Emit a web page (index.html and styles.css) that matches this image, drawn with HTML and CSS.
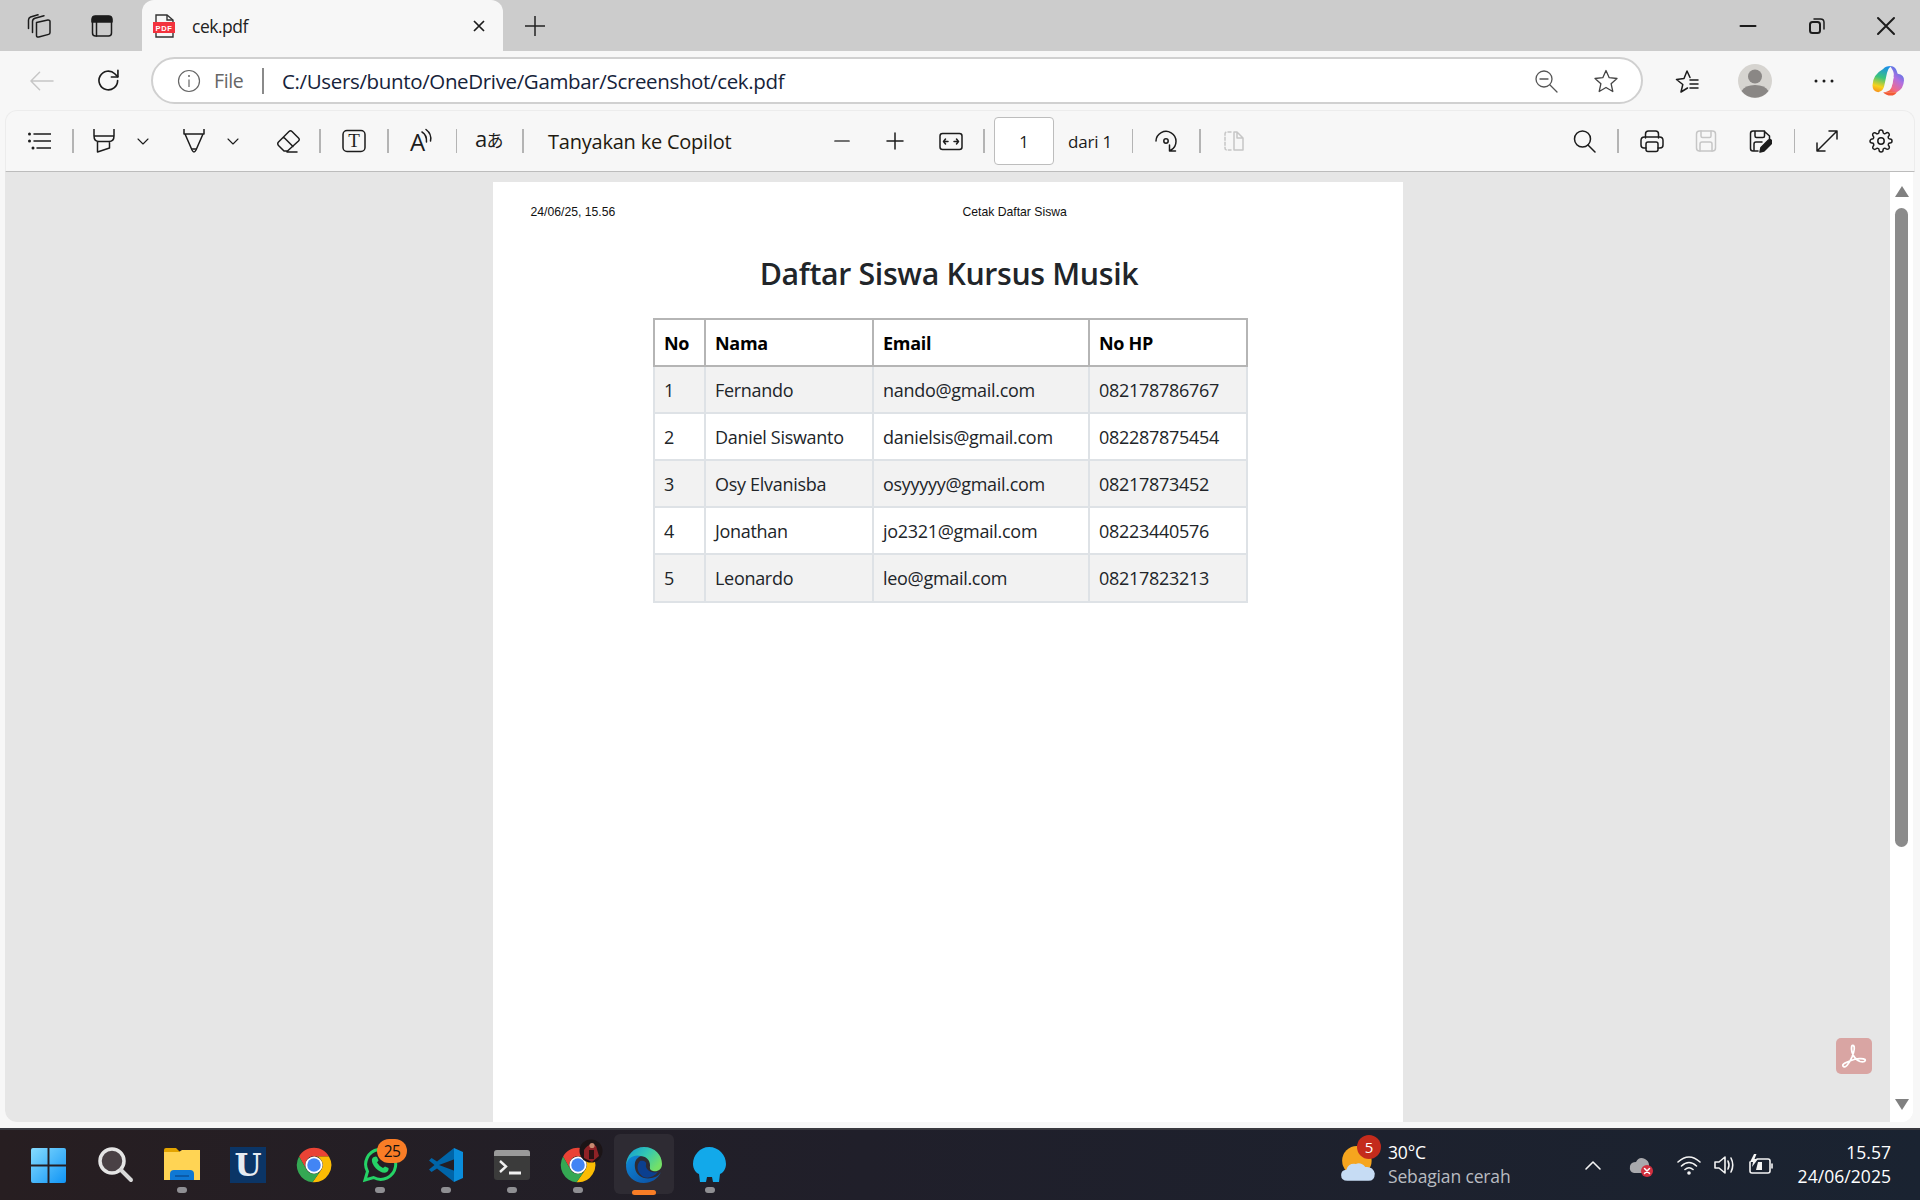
FILE: index.html
```html
<!DOCTYPE html>
<html lang="id">
<head>
<meta charset="utf-8">
<title>cek.pdf</title>
<link rel="stylesheet" href="styles.css">
</head>
<body>
<div class="app">
  <header class="tabbar">
    <div class="tabbar-left">
      <svg class="ic" viewBox="0 0 24 24"><path d="M9.500 8.500 20.800 6Q23 5.800 23 7.600V18.500Q23 20 21.600 20.400L11.800 23Q9.500 23.500 9.500 21.400Z"/><path d="M5.500 18.500V7.500Q5.500 5 8 4.300L17 1.800"/><path d="M1.500 14.500V6Q1.500 3.800 3.500 3L11 .8"/></svg>
      <svg class="ic" viewBox="0 0 24 24"><rect x="2.500" y="2.500" width="19" height="19.500" rx="3"/><path class="solid" d="M2 5.500Q2 2 5.500 2H18.500Q22 2 22 5.500V8H2Z"/><path d="M6.500 8V22"/></svg>
    </div>
    <div class="tab">
      <svg class="tab-pdf" viewBox="0 0 24 24"><path class="thin" d="M4 9V1H15L21 6V9M4 18V23H21V18"/><path class="thin" d="M15 1V6H21"/><rect class="red" x="1" y="8" width="22" height="11"/><text class="pdf-txt" x="12" y="16.500" text-anchor="middle">PDF</text></svg>
      <span class="tab-title">cek.pdf</span>
      <svg class="tab-x" viewBox="0 0 12 12"><path d="M1 1 11 11M11 1 1 11"/></svg>
    </div>
    <svg class="new-tab" viewBox="0 0 22 22"><path d="M11 1V21M1 11H21"/></svg>
    <div class="win-ctrl">
      <svg class="ic" viewBox="0 0 24 24"><path class="w2" d="M4.500 12H19.500"/></svg>
      <svg class="ic" viewBox="0 0 24 24"><rect class="w2" x="5" y="8" width="10" height="11" rx="2.500"/><path d="M9 5H15.500Q19 5 19 8.500V15"/></svg>
      <svg class="ic" viewBox="0 0 24 24"><path class="w2" d="M4 4 20 20M20 4 4 20"/></svg>
    </div>
  </header>

  <nav class="navbar">
    <svg class="ic-l muted" viewBox="0 0 26 22"><path d="M25 11H2M11 2 2 11 11 20"/></svg>
    <svg class="ic-l refresh" viewBox="0 0 26 26"><path d="M22.500 13A9.700 9.700 0 1 1 19.500 6L22.500 9"/><path d="M22.800 2.500V9.300H16"/></svg>
    <div class="address">
      <svg class="info" viewBox="0 0 24 24"><circle cx="12" cy="12" r="10.500"/><path d="M12 10.500V18"/><circle class="dot" cx="12" cy="7" r="1"/></svg>
      <span class="file-label">File</span>
      <span class="addr-sep"></span>
      <span class="url">C:/Users/bunto/OneDrive/Gambar/Screenshot/cek.pdf</span>
      <svg class="ic zoom-out" viewBox="0 0 24 24"><circle cx="10" cy="10" r="8"/><path d="M16 16 23 23M6 10H14"/></svg>
      <svg class="ic star" viewBox="0 0 24 24"><path d="M12 1.500 15.200 8.700 23 9.500 17.100 14.700 18.800 22.500 12 18.500 5.200 22.500 6.900 14.700 1 9.500 8.800 8.700Z"/></svg>
    </div>
    <svg class="ic fav" viewBox="0 0 24 24"><path d="M12.500 19 6 23 7.800 15.500 1.500 10.500 9 9.500 12 2 15 8.500M15 11H23M15 15H23M15 19H23"/></svg>
    <svg class="profile" viewBox="0 0 34 34"><circle class="p-bg" cx="17" cy="17" r="17"/><circle class="p-fg" cx="17" cy="12.500" r="7"/><path class="p-fg" d="M3.500 27Q7 21 17 21T30.500 27A17 17 0 0 1 3.500 27Z"/></svg>
    <svg class="dots" viewBox="0 0 24 6"><circle cx="4" cy="3" r="1.500"/><circle cx="12" cy="3" r="1.500"/><circle cx="20" cy="3" r="1.500"/></svg>
    <svg class="copilot" viewBox="0 0 34 32">
      <defs>
        <linearGradient id="cpA" x1="0.600" y1="0" x2="0.400" y2="1"><stop offset="0" stop-color="#1b8fe8"/><stop offset="0.450" stop-color="#3cc47c"/><stop offset="0.800" stop-color="#f8d21c"/><stop offset="1" stop-color="#f79a1e"/></linearGradient>
        <linearGradient id="cpB" x1="0.800" y1="0" x2="0.200" y2="1"><stop offset="0" stop-color="#2b7bea"/><stop offset="0.450" stop-color="#b26fe0"/><stop offset="0.800" stop-color="#f06a8c"/><stop offset="1" stop-color="#f4633a"/></linearGradient>
      </defs>
      <path fill="url(#cpB)" d="M19 1Q24 1 25.500 5L27 9Q34 10 33.500 16 33 25 26 28H14Q20 27 21 22L23 10Q23 6 19 1Z"/>
      <path fill="url(#cpA)" d="M12 4Q14 1 20 1 17.500 3 16 8L13 22Q12 27 7 28 1 28 1 21 1 10 12 4Z"/>
      <path fill="#f35a35" d="M12 28H26Q24 31.500 20 31.500 15 31.500 12 28Z"/>
      <path fill="#f7f7f7" d="M19.500 12 23 12 21.500 20 17.500 20Z"/>
    </svg>
  </nav>

  <div class="pdfbar">
    <svg class="ic" viewBox="0 0 24 24"><path d="M7 5H24M7 12H24M10 19H24"/><circle class="dot" cx="2.500" cy="5" r="1.500"/><circle class="dot" cx="2.500" cy="12" r="1.500"/><circle class="dot" cx="6" cy="19" r="1.500"/></svg>
    <span class="sep"></span>
    <svg class="ic" viewBox="0 0 24 24"><path d="M2 0V7Q2 12.500 7 12.500H17Q22 12.500 22 7V0M2 7H22M5.500 12.500V23L17.500 19V12.500"/></svg>
    <svg class="chev" viewBox="0 0 24 24"><path d="M7 10 12 15 17 10"/></svg>
    <svg class="ic" viewBox="0 0 24 24"><path d="M2 0V5H22V0M3 5 10 21Q12 25 14 21L21 5M10 20H14"/></svg>
    <svg class="chev" viewBox="0 0 24 24"><path d="M7 10 12 15 17 10"/></svg>
    <svg class="ic" viewBox="0 0 24 24"><path d="M2.500 13 13 2.500Q14.500 1 16 2.500L22.500 9Q24 10.500 22.500 12L11.500 22H8L2.500 16.500Q1 14.500 2.500 13ZM7.500 8 17 17.500M11 23H21"/></svg>
    <span class="sep"></span>
    <svg class="ic" viewBox="0 0 24 24"><rect x="1" y="1.500" width="22" height="21" rx="4"/><text class="ic-serif" x="12" y="18" text-anchor="middle">T</text></svg>
    <span class="sep"></span>
    <svg class="ic open" viewBox="0 0 24 24"><text class="ic-a" x="7.500" y="22" text-anchor="middle">A</text><path d="M12 3Q17 6 16.500 13M16 .5Q22 5 20.500 12"/></svg>
    <span class="sep sep-thin"></span>
    <svg class="ic open" viewBox="0 0 24 24"><text class="ic-tr" x="-2" y="18">a</text><text class="ic-tr-j" x="9.500" y="18">あ</text></svg>
    <span class="sep"></span>
    <span class="ask">Tanyakan ke Copilot</span>
    <svg class="ic" viewBox="0 0 24 24"><path class="grey-w" d="M5 12H19"/></svg>
    <svg class="ic" viewBox="0 0 24 24"><path d="M12 4V20M4 12H20"/></svg>
    <svg class="ic" viewBox="0 0 24 24"><rect x="1" y="4.500" width="22" height="16" rx="2.500"/><path d="M4.500 12.500H9M6.500 10 4.500 12.500 6.500 15M15 12.500H19.500M17.500 10 19.500 12.500 17.500 15"/></svg>
    <span class="sep"></span>
    <span class="page-input">1</span>
    <span class="page-total">dari 1</span>
    <span class="sep sep-thin"></span>
    <svg class="ic" viewBox="0 0 24 24"><path d="M2 12A10 10 0 1 1 17 21M15.500 16V22H21.500"/><circle cx="12" cy="12" r="2.200"/></svg>
    <span class="sep"></span>
    <svg class="ic pale" viewBox="0 0 24 24"><path d="M12 3H15L21 9V21H12ZM15 3V9H21"/><path class="dash" d="M9 3H5Q3 3 3 5V19Q3 21 5 21H9"/></svg>
    <svg class="ic" viewBox="0 0 24 24"><circle cx="10.500" cy="10" r="8"/><path d="M16 16 23 23"/></svg>
    <span class="sep"></span>
    <svg class="ic" viewBox="0 0 24 24"><path d="M5.500 9V5Q5.500 2 8.500 2H15.500Q18.500 2 18.500 5V9M6 19H4Q1 19 1 16V11.500Q1 8 4.500 8H19.500Q23 8 23 11.500V16Q23 19 20 19H18"/><rect x="6" y="13" width="12" height="9.500" rx="2"/></svg>
    <svg class="ic pale" viewBox="0 0 24 24"><rect x="2.500" y="2" width="19" height="20" rx="3"/><path d="M7 2V7Q7 8.500 8.500 8.500H15.500Q17 8.500 17 7V2M6 22V15Q6 13 8 13H16Q18 13 18 15V22"/></svg>
    <svg class="ic" viewBox="0 0 24 24"><path d="M10 22H5Q2.500 22 2.500 19.500V4.500Q2.500 2 5 2H16L21.500 7V10M7 2V7Q7 8.500 8.500 8.500H15Q16.500 8.500 16.500 7V2M6 21V15Q6 13 8 13H14"/><path class="solid" d="M12 23 13 18.500 20.500 11Q22 10 23.500 11.500 24.500 13 23.500 14.500L16 22Z"/></svg>
    <span class="sep sep-thin"></span>
    <svg class="ic" viewBox="0 0 24 24"><path d="M2 22 22 2M14 2H22V10M2 14V22H10"/></svg>
    <svg class="ic" viewBox="0 0 24 24"><path d="M19.400 15a1.650 1.650 0 0 0 .33 1.820l.06.06a2 2 0 0 1 0 2.830 2 2 0 0 1-2.830 0l-.06-.06a1.650 1.650 0 0 0-1.820-.33 1.650 1.650 0 0 0-1 1.510V21a2 2 0 0 1-2 2 2 2 0 0 1-2-2v-.09A1.650 1.650 0 0 0 9 19.400a1.650 1.650 0 0 0-1.820.33l-.06.06a2 2 0 0 1-2.830 0 2 2 0 0 1 0-2.830l.06-.06a1.650 1.650 0 0 0 .33-1.820 1.650 1.650 0 0 0-1.510-1H3a2 2 0 0 1-2-2 2 2 0 0 1 2-2h.09A1.650 1.650 0 0 0 4.600 9a1.650 1.650 0 0 0-.33-1.820l-.06-.06a2 2 0 0 1 0-2.830 2 2 0 0 1 2.830 0l.06.06a1.650 1.650 0 0 0 1.820.33H9a1.650 1.650 0 0 0 1-1.510V3a2 2 0 0 1 2-2 2 2 0 0 1 2 2v.09a1.650 1.650 0 0 0 1 1.510 1.650 1.650 0 0 0 1.820-.33l.06-.06a2 2 0 0 1 2.830 0 2 2 0 0 1 0 2.830l-.06.06a1.650 1.650 0 0 0-.33 1.820V9a1.650 1.650 0 0 0 1.510 1H21a2 2 0 0 1 2 2 2 2 0 0 1-2 2h-.09a1.650 1.650 0 0 0-1.510 1z"/><circle cx="12" cy="12" r="3.200"/></svg>
  </div>

  <main class="viewer">
    <div class="canvas">
      <article class="page">
        <div class="print-head">
          <span class="print-date">24/06/25, 15.56</span>
          <span class="print-title">Cetak Daftar Siswa</span>
        </div>
        <div class="doc">
          <h1 class="doc-title">Daftar Siswa Kursus Musik</h1>
          <table class="students">
            <colgroup><col class="c1"><col class="c2"><col class="c3"><col class="c4"></colgroup>
            <thead><tr><th>No</th><th>Nama</th><th>Email</th><th>No HP</th></tr></thead>
            <tbody>
              <tr><td>1</td><td>Fernando</td><td>nando@gmail.com</td><td>082178786767</td></tr>
              <tr><td>2</td><td>Daniel Siswanto</td><td>danielsis@gmail.com</td><td>082287875454</td></tr>
              <tr><td>3</td><td>Osy Elvanisba</td><td>osyyyyy@gmail.com</td><td>08217873452</td></tr>
              <tr><td>4</td><td>Jonathan</td><td>jo2321@gmail.com</td><td>08223440576</td></tr>
              <tr><td>5</td><td>Leonardo</td><td>leo@gmail.com</td><td>08217823213</td></tr>
            </tbody>
          </table>
        </div>
      </article>
      <div class="acrobat">
        <svg viewBox="0 0 36 36"><path d="M7 28C9 31 13 26 16 19 18 14 19 9 17.500 7.500 15.500 6.500 15 10 16 14 17.500 19 20 22 24 23.500 28 24.500 30 23 29 21.500 27 20 20 20.500 15 22.500 10 24.500 6 26 7 28Z"/></svg>
      </div>
    </div>
    <div class="scrollbar">
      <span class="arrow-up"></span>
      <span class="thumb"></span>
      <span class="arrow-down"></span>
    </div>
  </main>

  <footer class="taskbar">
    <div class="tb-apps">
      <div class="app-slot">
        <svg class="app-ic win-ic" viewBox="0 0 36 36">
          <defs><linearGradient id="winG" x1="0" y1="0" x2="1" y2="1"><stop offset="0" stop-color="#86dcff"/><stop offset="1" stop-color="#0f94f5"/></linearGradient></defs>
          <path fill="url(#winG)" d="M0 2Q0 0 2 0H17V17H0ZM19 0H34Q36 0 36 2V17H19ZM0 19H17V36H2Q0 36 0 34ZM19 19H36V34Q36 36 34 36H19Z"/>
        </svg>
      </div>
      <div class="app-slot">
        <svg class="app-ic" viewBox="0 0 36 36"><circle cx="14" cy="14" r="12" fill="#4a4145" stroke="#e5e5e5" stroke-width="3.500"/><path d="M23 23 33 33" stroke="#d9d9d9" stroke-width="4" stroke-linecap="round"/></svg>
      </div>
      <div class="app-slot has-dot">
        <svg class="app-ic" viewBox="0 0 36 36"><path fill="#e3a400" d="M0 3Q0 1 2 1H12L16 5H0Z"/><path fill="#ffd454" d="M0 5H15L18 3H36V33H0Z"/><path fill="#0f78d4" d="M6 33V27Q6 23 10 23H26Q30 23 30 27V33Z"/><path fill="#0a5aa8" d="M11 28H25V30H11Z"/></svg>
      </div>
      <div class="app-slot">
        <span class="u-logo">U</span>
      </div>
      <div class="app-slot">
        <svg class="app-ic" viewBox="0 0 48 48"><use href="#chrome-mark"/></svg>
      </div>
      <div class="app-slot has-dot">
        <svg class="app-ic" viewBox="0 0 36 36"><path d="M3 33 5.500 24.500A15 15 0 1 1 11.500 30.500Z" fill="none" stroke="#25d366" stroke-width="3"/><path fill="#25d366" d="M12 10Q14 9 15 10L16.500 13.500 15 15.500Q17 19 21 21L23 19.500 26.500 21Q27 24 24 25.500 19 26.500 14 21.500 9 16 10 12Q11 10 12 10Z"/></svg>
        <span class="wa-badge">25</span>
      </div>
      <div class="app-slot has-dot">
        <svg class="app-ic" viewBox="0 0 36 36"><path fill="#0065a9" d="M1 13.500 3.500 11 9 14.500 26 1 27 12 11 18 27 24 26 35 9 21.500 3.500 25 1 22.500 6.500 18Z"/><path fill="#0a8ddb" d="M26 1 35 5V31L26 35Z"/></svg>
      </div>
      <div class="app-slot has-dot">
        <svg class="app-ic" viewBox="0 0 36 30"><rect y="0" width="36" height="30" rx="3" fill="#3b3b3b"/><path d="M3 0H33Q36 0 36 3V6H0V3Q0 0 3 0Z" fill="#9a9a9a"/><path d="M6 11 12 16.500 6 22" fill="none" stroke="#f0f0f0" stroke-width="2.400"/><path d="M15 23H27" stroke="#f0f0f0" stroke-width="3"/></svg>
      </div>
      <div class="app-slot has-dot">
        <svg class="app-ic" viewBox="0 0 48 48">
          <defs>
            <g id="chrome-mark">
              <path fill="#ea4335" d="M4.100 12.500A23 23 0 0 1 43.900 12.500H24A11.500 11.500 0 0 0 14 30Z"/>
              <path fill="#fbbc04" d="M43.900 12.500A23 23 0 0 1 22 47L34 30A11.500 11.500 0 0 0 24 12.500Z"/>
              <path fill="#34a853" d="M22 47A23 23 0 0 1 4.100 12.500L14 30A11.500 11.500 0 0 0 34 30Z"/>
              <circle cx="24" cy="24" r="11.500" fill="#fff"/>
              <circle cx="24" cy="24" r="9" fill="#4285f4"/>
            </g>
          </defs>
          <use href="#chrome-mark"/>
        </svg>
        <svg class="avatar" viewBox="0 0 24 24"><circle cx="12" cy="12" r="11.500" fill="#1b1416"/><path fill="#8f2226" d="M5 11Q10 3 17 7L20 17 13 23 5 19Z"/><circle cx="13" cy="6.500" r="2.600" fill="#c98a70"/><path fill="#2a1214" d="M10 11H15V20H10Z"/></svg>
      </div>
      <div class="app-slot active">
        <svg class="app-ic" viewBox="0 0 36 36">
          <defs>
            <linearGradient id="edgeA" x1="0" y1="0" x2="1" y2="0.600"><stop offset="0" stop-color="#0f98d8"/><stop offset="0.550" stop-color="#35c8b0"/><stop offset="1" stop-color="#74e067"/></linearGradient>
            <linearGradient id="edgeB" x1="0" y1="0" x2="1" y2="1"><stop offset="0" stop-color="#0f8ad8"/><stop offset="1" stop-color="#0b4b9f"/></linearGradient>
          </defs>
          <path fill="url(#edgeA)" d="M18 0C29 0 36 8 36 17 36 23 31 25 27 24 23 23 24 20 24 18 24 13 20 9 14 9 8 9 2 13 0 19 0 8 8 0 18 0Z"/>
          <path fill="url(#edgeB)" d="M0 19C1 10 9 7 15 9 10 11 8 15 9 21 10 28 17 33 26 31 31 30 33 28 35 25 32 32 25 36 18 36 8 36 0 29 0 19Z"/>
          <path fill="#0b3f8f" d="M14 14C18 13 21 15 20 18 19 22 25 27 32 25 27 31 20 32 16 29 11 25 10 18 14 14Z"/>
        </svg>
      </div>
      <div class="app-slot has-dot">
        <svg class="app-ic" viewBox="0 0 36 36"><path fill="#12a9ea" d="M17 0C27 0 34 8 34 17 34 22 31 26 28 27L27 35H21L20 30H15L14 35H8L7 27C4 26 1 22 1 17 1 8 8 0 17 0Z"/></svg>
      </div>
    </div>
    <div class="tray">
      <div class="weather-ic">
        <svg viewBox="0 0 38 38"><circle cx="17" cy="15" r="14" fill="#f6a51e"/><path fill="#c6dcf4" d="M8 34Q2 34 2 28.500 2 24 7 23.500 9 17 16 18 21 16 25 21 32 20 34 27 34 34 28 34Z"/></svg>
        <span class="wx-badge">5</span>
      </div>
      <div class="weather-txt">
        <span class="wx-temp">30°C</span>
        <span class="wx-desc">Sebagian cerah</span>
      </div>
      <svg class="tray-ic" viewBox="0 0 24 24"><path d="M5 16 12 9 19 16"/></svg>
      <svg class="tray-ic" viewBox="0 0 24 24"><path class="cld" d="M5 20Q0 19 1 13 2 9 7 9 10 3 16 6 20 8 20 12V20Z"/><circle class="err" cx="18" cy="18" r="6"/><path class="err-x" d="M15.500 15.500 20.500 20.500M20.500 15.500 15.500 20.500"/></svg>
      <svg class="tray-ic" viewBox="0 0 24 24"><path d="M1 9Q12 -1 23 9M4.500 13Q12 6 19.500 13M8 16.500Q12 13 16 16.500"/><circle class="tray-dot" cx="12" cy="20" r="1.800"/></svg>
      <svg class="tray-ic" viewBox="0 0 24 24"><path d="M2 9H6L12 4V20L6 15H2ZM15 8Q17 12 15 16M18 5Q21.500 12 18 19"/></svg>
      <svg class="tray-ic" viewBox="0 0 24 24"><path d="M8 6H19Q21 6 21 8V18Q21 20 19 20H3Q1 20 1 18V9M23 11V15"/><path class="tray-bolt" d="M5 1 1 9H4L3 14 9 6H5.500L7.500 1ZM9 9H13V17H7Z"/></svg>
      <div class="clock">
        <span>15.57</span>
        <span>24/06/2025</span>
      </div>
    </div>
  </footer>
</div>
</body>
</html>
```

FILE: styles.css
```css
* { box-sizing: border-box; }
html, body { margin: 0; padding: 0; }
body { font-family: "Open Sans", "Noto Sans", sans-serif; color: #1a1a1a; background: #f7f7f7; }
svg { display: block; flex: none; }

.app { width: 1920px; height: 1200px; display: flex; flex-direction: column; overflow: hidden; background: #f7f7f7; }

/* shared icon strokes */
.ic, .chev, .ic-l { width: 24px; height: 24px; fill: none; stroke: #1c1c1c; stroke-width: 1.5; stroke-linecap: round; stroke-linejoin: round; }
.open { overflow: visible; }
.solid { fill: #1c1c1c; }
.dot { fill: #1c1c1c; stroke: none; }
.w2 { stroke-width: 2; }
.pale { stroke: #c6c6c6; }
.dash { stroke-dasharray: 3 2; }

/* tab strip */
.tabbar { height: 51px; flex: none; background: #cccccc; display: flex; align-items: center; }
.tabbar-left { display: flex; gap: 39px; padding-left: 27px; width: 142px; }
.tab { width: 361px; height: 51px; background: #f7f7f7; border-radius: 12px 12px 0 0; display: flex; align-items: center; padding-left: 10px; }
.tab-pdf { width: 24px; height: 24px; }
.thin { fill: none; stroke: #333; stroke-width: 1.400; }
.red { fill: #f3323d; }
.pdf-txt { font: 700 7.500px "Liberation Sans", sans-serif; fill: #fff; letter-spacing: .6px; }
.tab-title { margin-left: 16px; font-size: 17.500px; flex: 1; letter-spacing: -.5px; color: #222; }
.tab-x { width: 12px; height: 12px; margin-right: 18px; fill: none; stroke: #1c1c1c; stroke-width: 1.700; }
.new-tab { width: 22px; height: 22px; margin-left: 21px; fill: none; stroke: #222; stroke-width: 1.500; }
.win-ctrl { margin-left: auto; display: flex; gap: 45px; padding-right: 22px; }

/* navigation row */
.navbar { height: 59px; flex: none; display: flex; align-items: center; padding: 0 15px 0 29px; }
.ic-l { width: 25px; height: 22px; }
.ic-l.muted { stroke: #c6c6c6; }
.refresh { width: 25px; height: 25px; margin-left: 42px; stroke-width: 1.700; }
.address { width: 1492px; height: 47px; flex: none; margin: 0 0 0 30px; background: #fff; border: 2px solid #d0d0d0; border-radius: 24px; display: flex; align-items: center; padding: 0 23px 0 24px; }
.info { width: 24px; height: 24px; fill: none; stroke: #666; stroke-width: 1.200; }
.info .dot { fill: #666; }
.file-label { margin-left: 13px; width: 33px; font-size: 19.500px; color: #666; letter-spacing: -.4px; }
.addr-sep { width: 2px; height: 26px; background: #8a8a8a; margin-left: 15px; }
.url { margin-left: 18px; font-size: 20.500px; color: #16233a; flex: 1; letter-spacing: -.35px; white-space: nowrap; }
.zoom-out { stroke: #555; stroke-width: 1.300; }
.star { margin-left: 36px; stroke: #444; stroke-width: 1.300; }
.fav { margin-left: 32px; }
.profile { width: 34px; height: 38px; margin-left: 39px; }
.p-bg { fill: #d6d4d0; }
.p-fg { fill: #8a8785; }
.dots { width: 24px; height: 6px; margin-left: 40px; fill: #1c1c1c; }
.copilot { width: 34px; height: 31px; margin-left: 35px; }

/* PDF toolbar */
.pdfbar {
  height: 62px; flex: none; margin: 0 5px 0 5px; padding-left: 21px;
  border: 1px solid #ececec; border-bottom: 1.500px solid #bcbcbc; border-radius: 12px 12px 0 0;
  display: grid; align-items: center;
  grid-template-columns: 34px 31px 39px 51px 39px 55px 32px 34px 34px 34px 34px 33px 34px 37px 282px 53px 56px 33px 22px 74px 52px 34px 34px 34px 350px 34px 34px 54px 54px 34px 33px 54px 24px;
}
.pdfbar > svg, .pdfbar > .sep { justify-self: start; }
.sep { width: 24px; height: 24px; display: block; background: linear-gradient(#b4b4b4, #b4b4b4) center / 2px 24px no-repeat; }
.sep-thin { background-size: 1px 24px; }
.chev { stroke-width: 1.100; }
.ic-serif { font: 400 19px "Liberation Serif", serif; fill: #1c1c1c; stroke: none; }
.ic-a { font: 400 24px "Open Sans", sans-serif; fill: #1c1c1c; stroke: none; }
.ic-tr { font: 400 22px "Open Sans", sans-serif; fill: #1c1c1c; stroke: none; }
.ic-tr-j { font: 400 17px "Noto Sans CJK JP", sans-serif; fill: #1c1c1c; stroke: none; }
.ask { font-size: 20px; letter-spacing: -.22px; color: #221a10; white-space: nowrap; }
.grey-w { stroke: #444; stroke-width: 1.700; }
.page-input { width: 60px; height: 48px; background: #fff; border: 1px solid #bdbdbd; border-radius: 4px; display: flex; align-items: center; justify-content: center; font-size: 16.500px; }
.page-total { font-size: 17px; letter-spacing: -.2px; white-space: nowrap; }

/* viewer */
.viewer { height: 950px; flex: none; margin: 0 7px 0 5px; display: flex; border-radius: 0 0 12px 12px; overflow: hidden; background: #fff; }
.canvas { flex: 1; background: #e6e6e6; display: flex; justify-content: center; padding-top: 10px; position: relative; }
.page { width: 910px; height: 1000px; background: #fff; padding: 23px 0 0 38px; }
.print-head { display: flex; font: 400 12.200px "Liberation Sans", sans-serif; line-height: 14px; color: #111; }
.print-date { width: 432px; }
.doc { margin-left: 122px; width: 593px; }
.doc-title { margin: 35px 0 0; text-align: center; font-size: 30.300px; font-weight: 600; line-height: 40px; color: #212529; letter-spacing: -.35px; }
.students { margin-top: 24px; width: 593px; table-layout: fixed; border-collapse: collapse; font-size: 18px; letter-spacing: -.3px; color: #212529; }
.c1 { width: 51px; } .c2 { width: 168px; } .c3 { width: 216px; } .c4 { width: 158px; }
.students th, .students td { height: 47.100px; padding: 0 8px 0 9.500px; text-align: left; vertical-align: middle; border: 2px solid #dee2e6; }
.students th { border-color: #b5b5b5; font-weight: 700; color: #000; background: #fff; }
.students tbody tr:nth-child(odd) td { background: #f2f2f2; }
.acrobat { position: absolute; right: 18px; bottom: 48px; width: 36px; height: 36px; border-radius: 5px; background: #d9a5a3; }
.acrobat svg { width: 36px; height: 36px; fill: none; stroke: #fff; stroke-width: 1.800; }

/* scrollbar */
.scrollbar { width: 23px; flex: none; background: #fff; display: flex; flex-direction: column; align-items: center; padding: 14px 0 12px; }
.arrow-up { width: 0; height: 0; border: 7px solid transparent; border-top: 0; border-bottom: 11px solid #808080; }
.thumb { width: 13px; height: 639px; margin-top: 11px; border-radius: 7px; background: #8b8b8b; }
.arrow-down { width: 0; height: 0; margin-top: auto; border: 7px solid transparent; border-bottom: 0; border-top: 11px solid #808080; }

/* taskbar */
.taskbar { margin-top: auto; height: 72px; flex: none; display: flex; align-items: center; padding-right: 29px; border-top: 2px solid #39393f; background: linear-gradient(90deg, #271e21 0%, #201f2a 45%, #1a2331 100%); color: #fff; }
.tb-apps { display: flex; padding-left: 17px; }
.app-slot { width: 66px; height: 70px; display: flex; align-items: center; justify-content: center; position: relative; }
.app-ic { width: 36px; height: 36px; }
.win-ic { width: 35px; height: 35px; margin-left: -4px; }
.has-dot::after { content: ""; position: absolute; left: 28px; bottom: 7px; width: 10px; height: 6px; border-radius: 3px; background: #8f8f93; }
.active::before { content: ""; position: absolute; left: 3px; top: 4px; width: 60px; height: 60px; border-radius: 6px; background: #2e2b33; }
.active::after { content: ""; position: absolute; left: 21px; bottom: 5px; width: 24px; height: 5px; border-radius: 3px; background: #f97d26; }
.active .app-ic { position: relative; }
.wa-badge { position: absolute; left: 30px; top: 9px; width: 30px; height: 24px; border-radius: 12px; background: #f97d26; color: #111; font-size: 15.500px; line-height: 24px; text-align: center; letter-spacing: -.5px; }
.avatar { position: absolute; left: 34px; top: 9px; width: 24px; height: 24px; }
.u-logo { width: 36px; height: 36px; background: #0b3566; color: #e7ecf2; font: 700 31px/36px "DejaVu Serif", serif; text-align: center; }
.tray { margin-left: auto; width: 552px; display: grid; grid-template-columns: 49px 193px 48px 48px 36px 36px 36px 106px; align-items: center; height: 70px; }
.weather-ic { position: relative; width: 40px; height: 40px; }
.weather-ic svg { width: 40px; height: 40px; }
.wx-badge { position: absolute; left: 18px; top: -10px; width: 24px; height: 24px; border-radius: 50%; background: #c42b1c; text-align: center; font-size: 15px; line-height: 24px; }
.weather-txt, .clock { display: flex; flex-direction: column; gap: 2px; padding-bottom: 2px; font-size: 17.500px; line-height: 22px; letter-spacing: -.15px; white-space: nowrap; }
.clock { letter-spacing: .05px; }
.wx-desc { color: #b9bcc1; }
.clock { text-align: right; align-items: flex-end; }
.tray-ic { width: 24px; height: 24px; fill: none; stroke: #f4f4f4; stroke-width: 1.600; stroke-linejoin: round; stroke-linecap: round; }
.tray-dot { fill: #f4f4f4; stroke: none; }
.tray-bolt { fill: #f4f4f4; stroke: none; }
.cld { fill: #a9a9ad; stroke: none; }
.err { fill: #d2303f; stroke: none; }
.err-x { stroke: #fff; stroke-width: 1.500; }
```
